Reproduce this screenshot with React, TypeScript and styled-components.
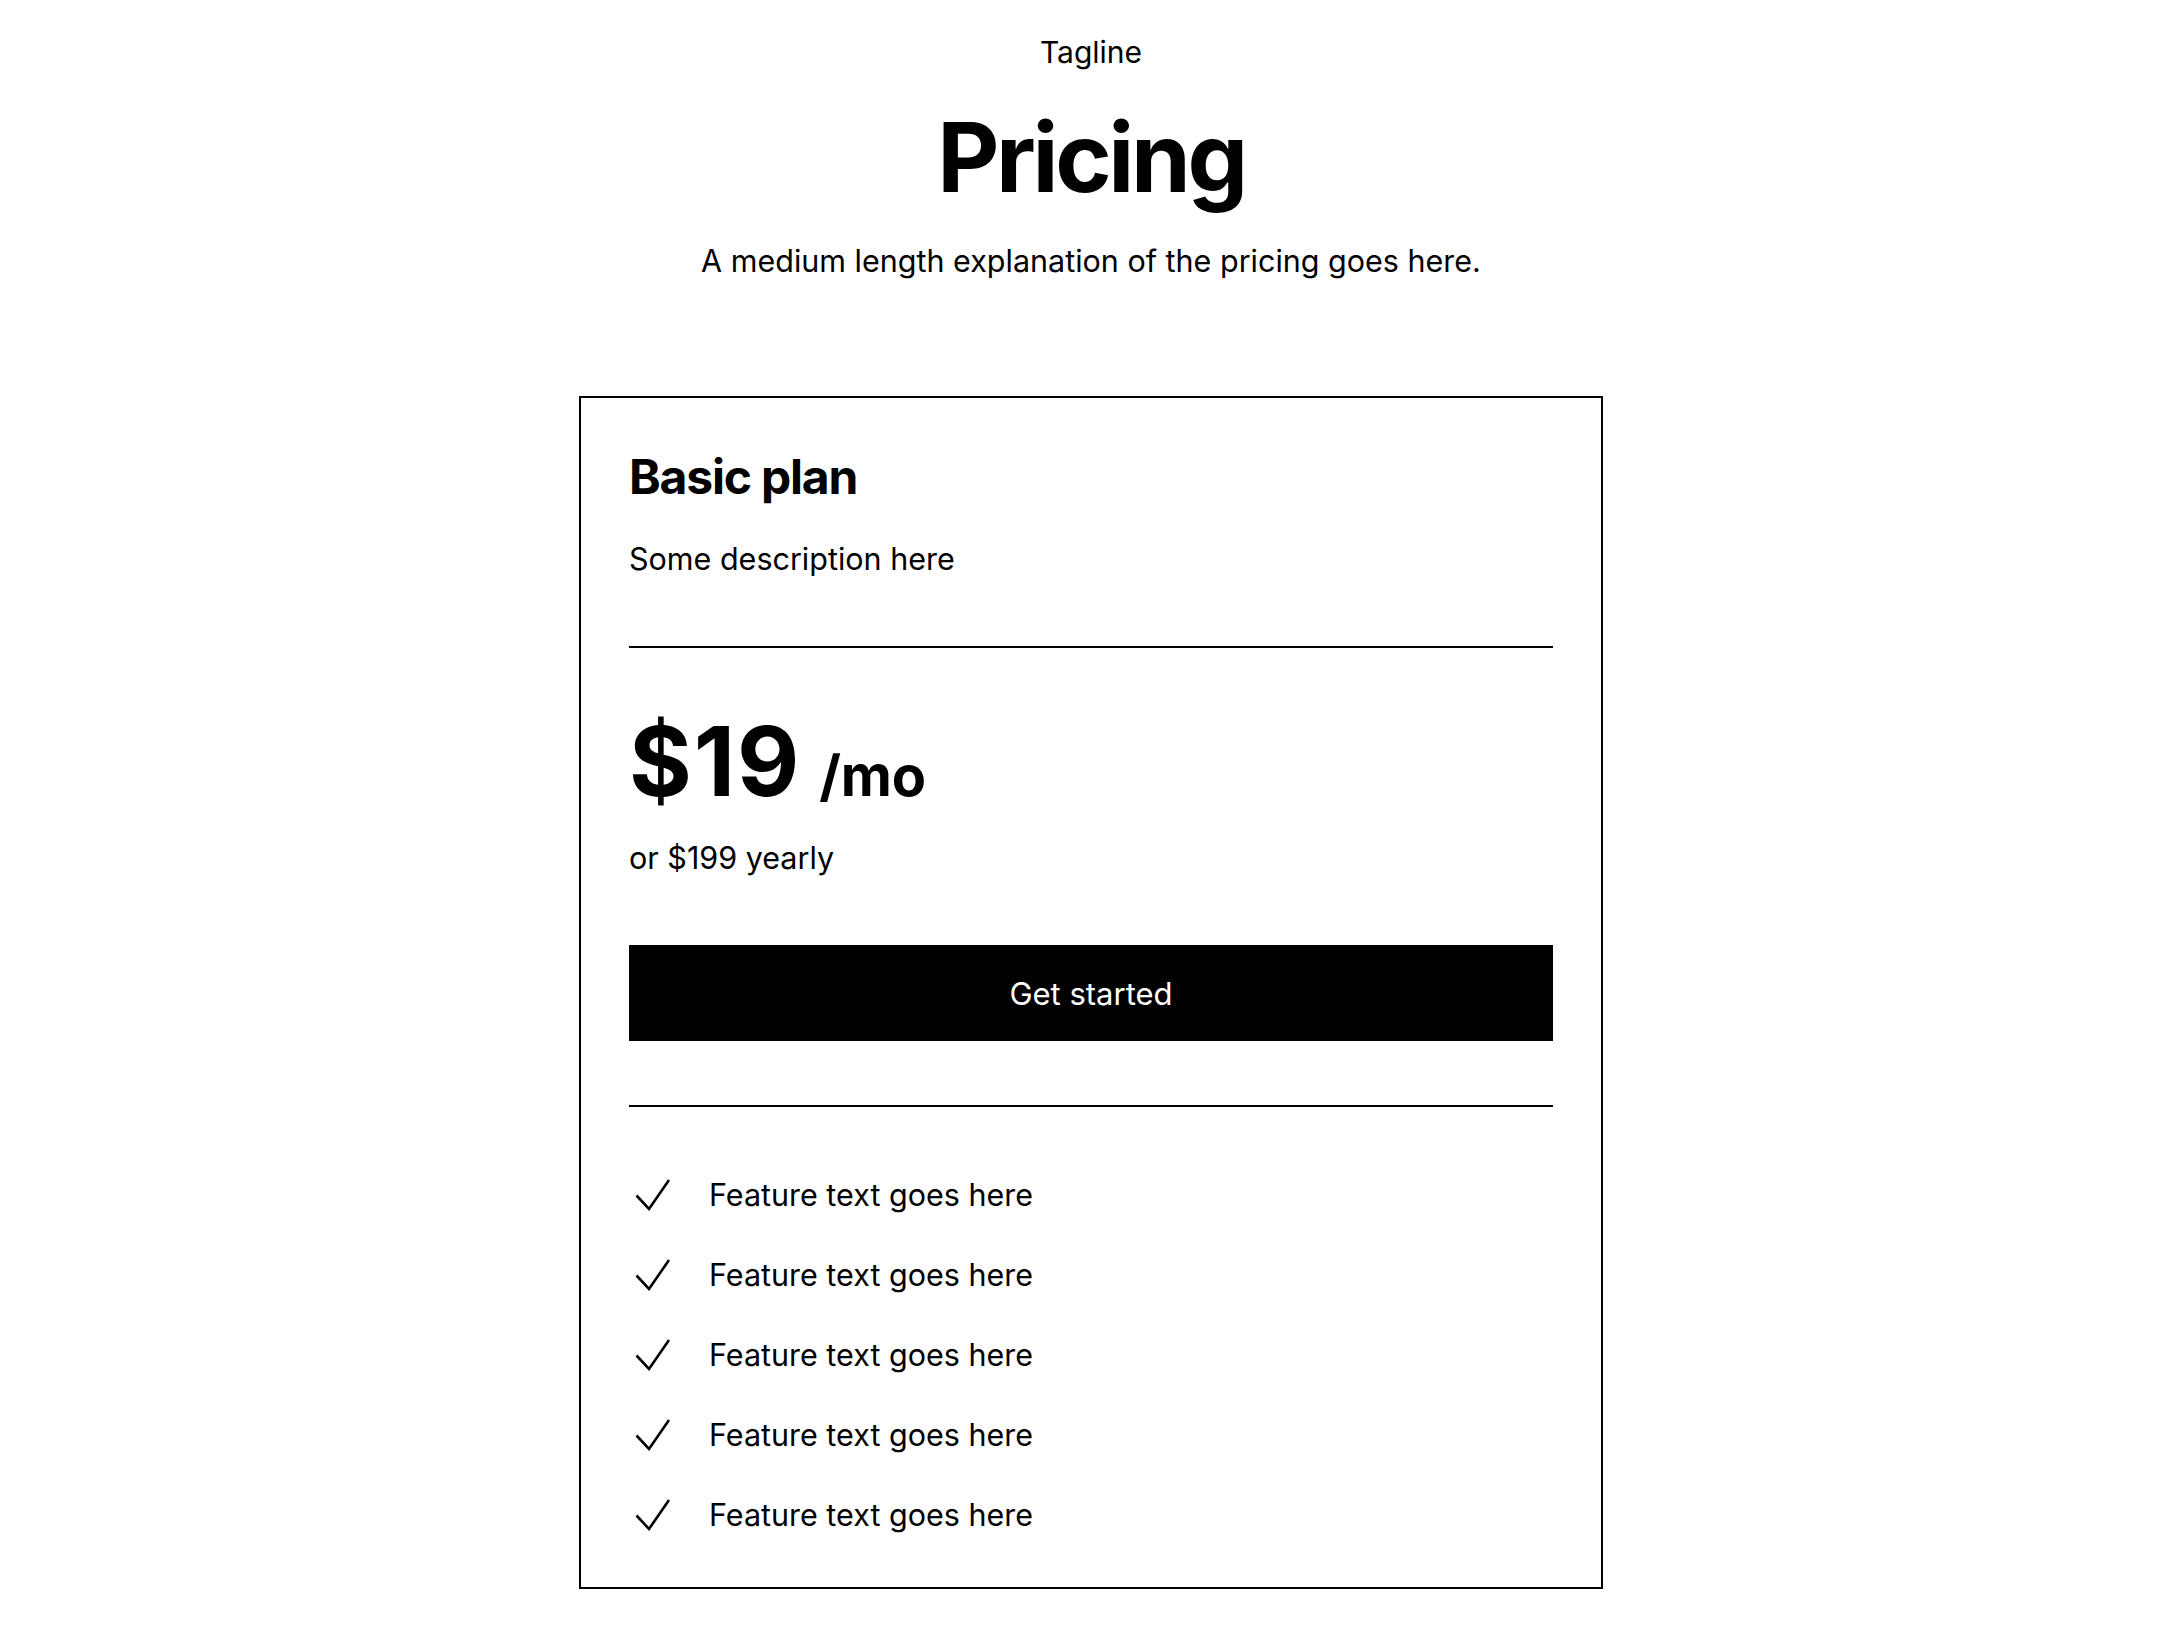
import React from 'react'
import styled, { createGlobalStyle } from 'styled-components'

const GlobalStyle = createGlobalStyle`
  html, body {
    margin: 0;
    padding: 0;
    background: #fff;
  }
  body {
    font-family: Inter, "Noto Sans", sans-serif;
    color: #000;
  }
  * {
    box-sizing: border-box;
  }
`

const features = [
  'Feature text goes here',
  'Feature text goes here',
  'Feature text goes here',
  'Feature text goes here',
  'Feature text goes here',
]

function CheckIcon() {
  return (
    <Check width="48" height="48" viewBox="0 0 48 48" fill="none">
      <path d="M7.5 24.5 L20 38 L40 9" stroke="#000" strokeWidth="2.6" />
    </Check>
  )
}

export default function App() {
  return (
    <>
      <GlobalStyle />
      <Section>
        <Header>
          <Tagline>Tagline</Tagline>
          <Heading>Pricing</Heading>
          <Lead>A medium length explanation of the pricing goes here.</Lead>
        </Header>

        <Card>
          <PlanName>Basic plan</PlanName>
          <PlanText>Some description here</PlanText>
          <Divider />
          <Price>
            $19<Period>/mo</Period>
          </Price>
          <Yearly>or $199 yearly</Yearly>
          <Button>Get started</Button>
          <Divider />
          <FeatureList>
            {features.map((text, i) => (
              <Feature key={i}>
                <CheckIcon />
                <span>{text}</span>
              </Feature>
            ))}
          </FeatureList>
        </Card>
      </Section>
    </>
  )
}

const Section = styled.section`
  display: flex;
  flex-direction: column;
  align-items: center;
  padding: 28px 0 40px;
`

const Header = styled.div`
  display: flex;
  flex-direction: column;
  align-items: center;
  text-align: center;
`

const Tagline = styled.p`
  margin: 0 0 24px;
  font-size: 30px;
  line-height: 48px;
`

const Heading = styled.h1`
  margin: 0 0 22px;
  font-size: 96px;
  line-height: 115px;
  font-weight: 700;
  letter-spacing: -0.035em;
`

const Lead = styled.p`
  margin: 0;
  font-size: 30.5px;
  line-height: 48px;
`

const Card = styled.div`
  width: 1024px;
  margin-top: 111px;
  border: 2px solid #000;
  padding: 50px 48px 48px;
  display: flex;
  flex-direction: column;
`

const PlanName = styled.h3`
  margin: 0;
  font-size: 48px;
  line-height: 58px;
  font-weight: 700;
  letter-spacing: -0.025em;
`

const PlanText = styled.p`
  margin: 29px 0 63px;
  font-size: 30.5px;
  line-height: 48px;
`

const Divider = styled.div`
  height: 2px;
  background: #000;
`

const Price = styled.div`
  margin-top: 56px;
  display: flex;
  align-items: baseline;
  font-size: 96px;
  line-height: 115px;
  font-weight: 700;
  letter-spacing: 0.02em;
`

const Period = styled.span`
  margin-left: 18px;
  font-size: 56px;
  line-height: 67px;
  letter-spacing: -0.005em;
`

const Yearly = styled.p`
  margin: 15px 0 0;
  font-size: 30.5px;
  line-height: 48px;
`

const Button = styled.button`
  margin: 63px 0 64px;
  height: 96px;
  border: 0;
  background: #000;
  color: #fff;
  font-family: inherit;
  font-size: 31px;
  cursor: pointer;
`

const FeatureList = styled.ul`
  list-style: none;
  margin: 64px 0 0;
  padding: 0;
  display: flex;
  flex-direction: column;
  gap: 32px;
`

const Feature = styled.li`
  display: flex;
  align-items: center;
  gap: 32px;
  font-size: 30.5px;
  line-height: 48px;
`

const Check = styled.svg`
  flex: none;
`
